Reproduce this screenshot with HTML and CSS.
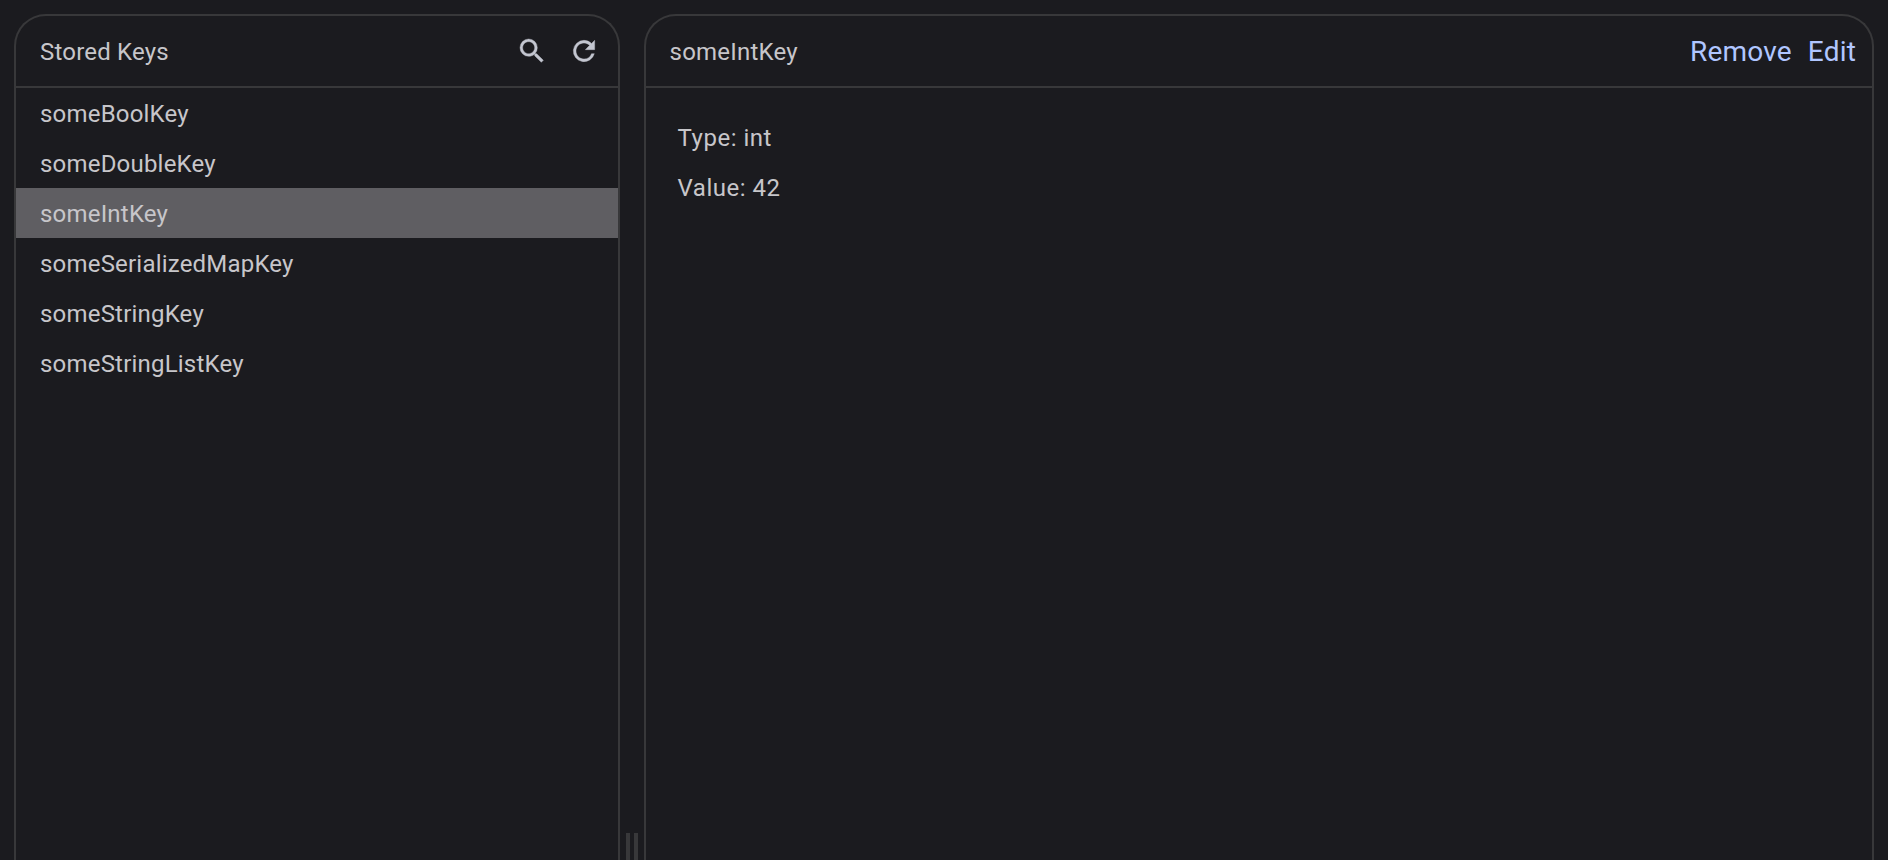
FILE: index.html
```html
<!DOCTYPE html>
<html lang="en">
<head>
<meta charset="utf-8">
<title>Stored Keys</title>
<link rel="stylesheet" href="styles.css">
</head>
<body>
<main class="split">
  <section class="panel keys">
    <header class="header">
      <h1 class="title">Stored Keys</h1>
      <div class="tools">
        <button class="icon-button" aria-label="Search"><svg class="icon" viewBox="0 0 24 24"><path d="M15.5 14h-.79l-.28-.27A6.471 6.471 0 0 0 16 9.5 6.5 6.5 0 1 0 9.5 16c1.61 0 3.09-.59 4.23-1.57l.27.28v.79l5 4.99L20.49 19l-4.99-5zm-6 0C7.01 14 5 11.99 5 9.5S7.01 5 9.5 5 14 7.01 14 9.5 11.99 14 9.5 14z"/></svg></button>
        <button class="icon-button" aria-label="Refresh"><svg class="icon" viewBox="0 0 24 24"><path d="M17.65 6.35A7.958 7.958 0 0 0 12 4a8 8 0 1 0 7.73 10h-2.08A5.99 5.99 0 0 1 12 18c-3.31 0-6-2.69-6-6s2.69-6 6-6c1.66 0 3.14.69 4.22 1.78L13 11h7V4l-2.35 2.35z"/></svg></button>
      </div>
    </header>
    <ul class="list">
      <li class="row">someBoolKey</li>
      <li class="row">someDoubleKey</li>
      <li class="row selected">someIntKey</li>
      <li class="row">someSerializedMapKey</li>
      <li class="row">someStringKey</li>
      <li class="row">someStringListKey</li>
    </ul>
  </section>
  <div class="divider"><span class="grip"></span><span class="grip"></span></div>
  <section class="panel detail">
    <header class="header">
      <h2 class="title">someIntKey</h2>
      <div class="actions">
        <button class="link">Remove</button>
        <button class="link">Edit</button>
      </div>
    </header>
    <div class="body">
      <p class="field">Type: int</p>
      <p class="field">Value: 42</p>
    </div>
  </section>
</main>
</body>
</html>
```

FILE: styles.css
```css
* { box-sizing: border-box; margin: 0; padding: 0; }
body {
  height: 860px;
  overflow: hidden;
  background: #1b1b1f;
  color: #c7c6ca;
  font-family: Roboto, sans-serif;
  font-size: 24px;
  letter-spacing: 0.2px;
}
button { background: none; border: 0; font: inherit; letter-spacing: inherit; color: inherit; }
.split { display: flex; height: 860px; padding: 14px 14px 0; }
.panel {
  border: 2px solid #38383a;
  border-bottom: 0;
  border-radius: 32px 32px 0 0;
  overflow: hidden;
}
.keys { width: 605.6px; }
.detail { flex: 1; }
.header {
  display: flex;
  align-items: center;
  justify-content: space-between;
  height: 72px;
  padding: 0 16px 0 24px;
  border-bottom: 2px solid #38383a;
}
.title { font-size: 24px; font-weight: 400; line-height: 34px; padding-top: 1px; }
.tools { display: flex; gap: 20px; padding-right: 2px; }
.icon-button { display: flex; }
.icon { width: 32px; height: 32px; fill: #c3c6d0; stroke: #c3c6d0; stroke-width: 0.3; }
.list { list-style: none; }
.row { height: 50px; padding: 1px 24px 0; line-height: 50px; }
.selected { background: #5f5e62; }
.divider {
  display: flex;
  align-items: flex-end;
  justify-content: center;
  gap: 4px;
  width: 24px;
}
.grip { width: 4px; height: 27px; background: #38383a; }
.actions { display: flex; gap: 16px; padding-top: 2px; font-size: 28px; line-height: 34px; letter-spacing: 0.2px; color: #b0c6ff; }
.body { padding: 25px 32px; }
.field { height: 50px; line-height: 50px; letter-spacing: 0.5px; }
```
